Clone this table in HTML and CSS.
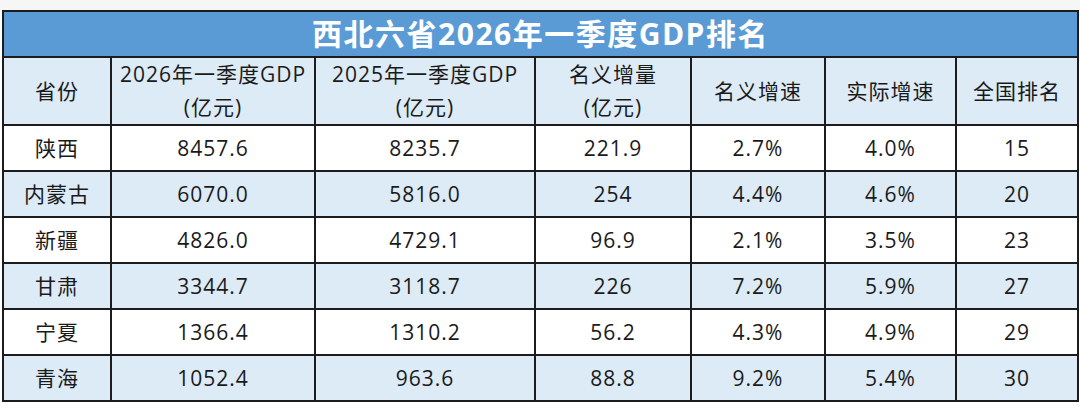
FILE: index.html
```html
<!DOCTYPE html>
<html lang="zh-CN">
<head>
<meta charset="utf-8">
<title>西北六省2026年一季度GDP排名</title>
<link rel="stylesheet" href="styles.css">
</head>
<body>
<div class="sheet">
  <table class="gdp">
    <colgroup>
      <col class="c1"><col class="c2"><col class="c3"><col class="c4"><col class="c5"><col class="c6"><col class="c7">
    </colgroup>
    <thead>
      <tr class="title-row"><th colspan="7">西北六省2026年一季度GDP排名</th></tr>
      <tr class="head-row">
        <th>省份</th>
        <th>2026年一季度GDP<br>(亿元)</th>
        <th>2025年一季度GDP<br>(亿元)</th>
        <th>名义增量<br>(亿元)</th>
        <th>名义增速</th>
        <th>实际增速</th>
        <th>全国排名</th>
      </tr>
    </thead>
    <tbody>
      <tr><td>陕西</td><td>8457.6</td><td>8235.7</td><td>221.9</td><td>2.7%</td><td>4.0%</td><td>15</td></tr>
      <tr class="alt"><td>内蒙古</td><td>6070.0</td><td>5816.0</td><td>254</td><td>4.4%</td><td>4.6%</td><td>20</td></tr>
      <tr><td>新疆</td><td>4826.0</td><td>4729.1</td><td>96.9</td><td>2.1%</td><td>3.5%</td><td>23</td></tr>
      <tr class="alt"><td>甘肃</td><td>3344.7</td><td>3118.7</td><td>226</td><td>7.2%</td><td>5.9%</td><td>27</td></tr>
      <tr><td>宁夏</td><td>1366.4</td><td>1310.2</td><td>56.2</td><td>4.3%</td><td>4.9%</td><td>29</td></tr>
      <tr class="alt"><td>青海</td><td>1052.4</td><td>963.6</td><td>88.8</td><td>9.2%</td><td>5.4%</td><td>30</td></tr>
    </tbody>
  </table>
</div>
</body>
</html>
```

FILE: styles.css
```css
html, body {
  margin: 0;
  padding: 0;
  background: #ffffff;
}
body {
  width: 1080px;
  height: 406px;
  overflow: hidden;
  font-family: "Open Sans", "Noto Sans CJK SC", sans-serif;
  color: #1a1a1a;
}
.sheet {
  padding: 10px 0 0 2px;
  background: linear-gradient(#f6f6f6, #f6f6f6) top / 100% 10px no-repeat, #ffffff;
}
.gdp {
  border-collapse: collapse;
  table-layout: fixed;
  width: 1075px;
}
.c1 { width: 108px; }
.c2 { width: 204px; }
.c3 { width: 220px; }
.c4 { width: 156px; }
.c5 { width: 134px; }
.c6 { width: 131px; }
.c7 { width: 122px; }
.gdp th, .gdp td {
  border: 2px solid #1c1c1c;
  text-align: center;
  padding: 0;
  font-size: 21px;
  font-weight: 400;
  letter-spacing: 1px;
  line-height: 30px;
}
.title-row th {
  background: #5b9bd5;
  color: #ffffff;
  font-weight: 700;
  font-size: 30px;
  letter-spacing: 1.5px;
  height: 44px;
  line-height: 40px;
}
.head-row th {
  background: #ddebf7;
  height: 65px;
  line-height: 33px;
}
.gdp td {
  height: 44px;
  background: #ffffff;
}
.gdp tr.alt td {
  background: #ddebf7;
}
```
